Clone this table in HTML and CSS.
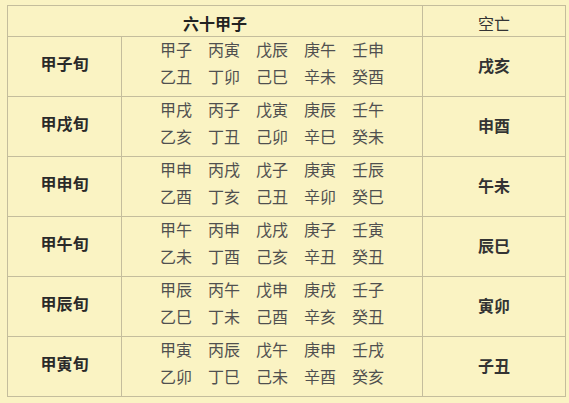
FILE: index.html
```html
<!DOCTYPE html>
<html lang="zh">
<head>
<meta charset="utf-8">
<title>六十甲子 空亡</title>
<link rel="stylesheet" href="styles.css">
</head>
<body>
<div class="wrap">
<table class="jz">
<colgroup><col class="c1"><col class="c2"><col class="c3"></colgroup>
<thead>
<tr class="head"><th colspan="2" class="h-main">六十甲子</th><th class="h-side">空亡</th></tr>
</thead>
<tbody>
<tr><td class="xun">甲子旬</td><td class="pairs"><div class="ln"><span>甲子</span><span>丙寅</span><span>戊辰</span><span>庚午</span><span>壬申</span></div><div class="ln"><span>乙丑</span><span>丁卯</span><span>己巳</span><span>辛未</span><span>癸酉</span></div></td><td class="kw">戌亥</td></tr>
<tr><td class="xun">甲戌旬</td><td class="pairs"><div class="ln"><span>甲戌</span><span>丙子</span><span>戊寅</span><span>庚辰</span><span>壬午</span></div><div class="ln"><span>乙亥</span><span>丁丑</span><span>己卯</span><span>辛巳</span><span>癸未</span></div></td><td class="kw">申酉</td></tr>
<tr><td class="xun">甲申旬</td><td class="pairs"><div class="ln"><span>甲申</span><span>丙戌</span><span>戊子</span><span>庚寅</span><span>壬辰</span></div><div class="ln"><span>乙酉</span><span>丁亥</span><span>己丑</span><span>辛卯</span><span>癸巳</span></div></td><td class="kw">午未</td></tr>
<tr><td class="xun">甲午旬</td><td class="pairs"><div class="ln"><span>甲午</span><span>丙申</span><span>戊戌</span><span>庚子</span><span>壬寅</span></div><div class="ln"><span>乙未</span><span>丁酉</span><span>己亥</span><span>辛丑</span><span>癸丑</span></div></td><td class="kw">辰巳</td></tr>
<tr><td class="xun">甲辰旬</td><td class="pairs"><div class="ln"><span>甲辰</span><span>丙午</span><span>戊申</span><span>庚戌</span><span>壬子</span></div><div class="ln"><span>乙巳</span><span>丁未</span><span>己酉</span><span>辛亥</span><span>癸丑</span></div></td><td class="kw">寅卯</td></tr>
<tr><td class="xun">甲寅旬</td><td class="pairs"><div class="ln"><span>甲寅</span><span>丙辰</span><span>戊午</span><span>庚申</span><span>壬戌</span></div><div class="ln"><span>乙卯</span><span>丁巳</span><span>己未</span><span>辛酉</span><span>癸亥</span></div></td><td class="kw">子丑</td></tr>
</tbody>
</table>
</div>
</body>
</html>
```

FILE: styles.css
```css
html, body {
  margin: 0;
  padding: 0;
  background: #faf3c3;
}
body {
  font-family: "Noto Sans CJK SC", "Noto Sans", sans-serif;
  color: #333;
}
.wrap {
  padding: 5px 0 0 7px;
}
.jz {
  border-collapse: collapse;
  table-layout: fixed;
  width: 558px;
}
.c1 { width: 114px; }
.c2 { width: 301px; }
.c3 { width: 143px; }
.jz th, .jz td {
  border: 1px solid #c4bd9c;
  padding: 0;
  text-align: center;
}
.head th {
  height: 31px;
  vertical-align: top;
  font-size: 16px;
  line-height: 20px;
  padding-top: 7px;
  box-sizing: border-box;
}
.h-main {
  font-weight: bold;
  color: #222;
}
.h-side {
  font-weight: normal;
  color: #333;
}
.jz tbody td {
  height: 60px;
  box-sizing: border-box;
  vertical-align: top;
}
.xun {
  font-size: 16px;
  font-weight: bold;
  color: #2a2a2a;
  line-height: 20px;
  padding-top: 16px !important;
}
.kw {
  font-size: 16px;
  font-weight: bold;
  color: #333;
  line-height: 20px;
  padding-top: 18px !important;
}
.pairs {
  font-size: 16px;
  color: #505050;
}
.ln {
  display: flex;
  justify-content: center;
  gap: 16px;
  height: 27px;
  line-height: 24px;
}
.ln:first-child {
  margin-top: 0;
}
```
